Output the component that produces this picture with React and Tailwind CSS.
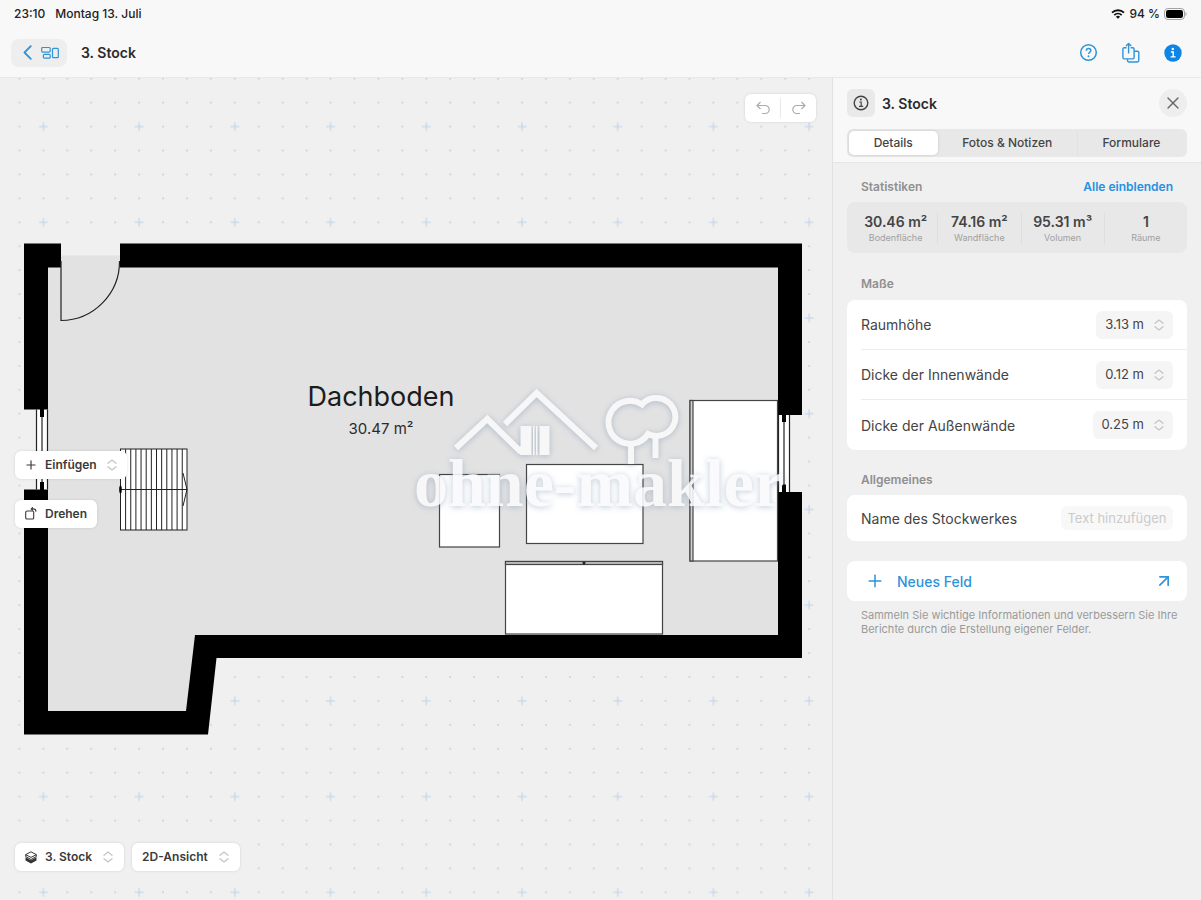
import React, { useState } from 'react';
import { Plus, ArrowUpRight, X } from 'lucide-react';

const TABS = [
  { id: 'details', label: 'Details' },
  { id: 'notes', label: 'Fotos & Notizen' },
  { id: 'forms', label: 'Formulare' },
];

const STATS = [
  { label: 'Bodenfläche', value: '30.46 m²' },
  { label: 'Wandfläche', value: '74.16 m²' },
  { label: 'Volumen', value: '95.31 m³' },
  { label: 'Räume', value: '1' },
];

const MEASURES = [
  { id: 'height', label: 'Raumhöhe', value: '3.13 m' },
  { id: 'inner', label: 'Dicke der Innenwände', value: '0.12 m' },
  { id: 'outer', label: 'Dicke der Außenwände', value: '0.25 m' },
];

const GRID = 95.72;
const DOTS = [0, 1, 2, 3].flatMap(r => [0, 1, 2, 3].map(c => [c, r])).filter(([c, r]) => c + r > 0);
const STEPS = Array.from({ length: 12 }, (_, i) => 125.6 + i * 5.15);

function UpDown({ className = '' }) {
  return (
    <svg viewBox="0 0 10 12" className={`w-[10px] h-3 fill-none stroke-[#c4c4c4] ${className}`} strokeWidth="1.2" strokeLinecap="round" strokeLinejoin="round">
      <path d="M1 4.3 5 1l4 3.3M1 7.7 5 11l4-3.3" />
    </svg>
  );
}

function InfoGlyph({ className }) {
  return (
    <svg viewBox="0 0 18 18" className={className} fill="none" stroke="currentColor" strokeWidth="1.4">
      <circle cx="9" cy="9" r="6.8" />
      <circle cx="8.9" cy="5.6" r="1" fill="currentColor" stroke="none" />
      <path d="M7.3 8h1.9v4.2M7 12.3h4.2" strokeWidth="1.2" />
    </svg>
  );
}

function StatusBar() {
  return (
    <div className="flex items-center justify-between h-7 px-[14px] text-[12px] font-medium text-[#222]">
      <div className="flex gap-[10px]">
        <span>23:10</span>
        <span>Montag 13. Juli</span>
      </div>
      <div className="flex items-center gap-1">
        <svg viewBox="0 0 14 10" className="w-[14px] h-[10px]" fill="none" stroke="#111" strokeWidth="1.8">
          <path d="M1 3.7a8.6 8.6 0 0 1 12 0M3.3 6.1a5.3 5.3 0 0 1 7.4 0" />
          <path d="M7 9.8 4.9 7.7a3 3 0 0 1 4.2 0Z" fill="#111" stroke="none" />
        </svg>
        <span>94 %</span>
        <svg viewBox="0 0 23 12" className="w-[23px] h-3">
          <rect x=".5" y=".5" width="20" height="11" rx="3.5" fill="none" stroke="#a3a3a3" />
          <rect x="2" y="2" width="17" height="8" rx="2.2" fill="#000" />
          <path d="M21.5 4v4c1.5-.7 1.5-3.3 0-4Z" fill="#a3a3a3" />
        </svg>
      </div>
    </div>
  );
}

function NavBar() {
  return (
    <div className="flex items-center h-[49px] pl-[11px] pr-[19px]">
      <button aria-label="Zurück" className="flex items-center h-7 pl-3 pr-2 gap-[9px] rounded-lg bg-[#eeeeee] text-[#2f93d8]">
        <svg viewBox="0 0 9 15" className="w-[9px] h-[15px]" fill="none" stroke="currentColor" strokeWidth="1.8" strokeLinecap="round" strokeLinejoin="round">
          <path d="M7.8 1.2 1.5 7.5l6.3 6.3" />
        </svg>
        <svg viewBox="0 0 18 14" className="w-[18px] h-[14px]" fill="none" stroke="currentColor" strokeWidth="1.2">
          <rect x=".7" y="1.5" width="8.5" height="4.6" rx="1" />
          <rect x="2.4" y="8.3" width="6.8" height="3.9" rx="1" />
          <rect x="11.5" y="2.3" width="5.8" height="9.4" rx="1" />
        </svg>
      </button>
      <h1 className="ml-[14px] text-[14px] font-semibold text-[#2b2b2b]">3. Stock</h1>
      <div className="flex items-center gap-6 ml-auto text-[#2f93d8]">
        <button aria-label="Hilfe">
          <svg viewBox="0 0 20 20" className="w-[19px] h-[19px]" fill="none" stroke="currentColor" strokeWidth="1.6">
            <circle cx="10" cy="10" r="8.2" />
            <path d="M7.7 8.1c.1-3 4.7-2.9 4.7-.1 0 1.8-2.3 1.7-2.3 3.7" />
            <circle cx="10" cy="14" r="1" fill="currentColor" stroke="none" />
          </svg>
        </button>
        <button aria-label="Teilen">
          <svg viewBox="0 0 18 21" className="w-[18px] h-[21px]" fill="none" stroke="currentColor" strokeWidth="1.4" strokeLinejoin="round">
            <path d="M4.6 5.7H2.3c-.8 0-1.4.5-1.4 1.3v8.5c0 .8.6 1.4 1.4 1.4h8.4c.8 0 1.4-.6 1.4-1.4V7c0-.8-.6-1.3-1.4-1.3H8.6" />
            <path d="M6.6 11.5V1.4M4 4l2.6-2.6L9.2 4M5.5 17v1.6c0 .8.6 1.4 1.4 1.4h8.5c.8 0 1.4-.6 1.4-1.4v-8c0-.8-.6-1.3-1.4-1.3h-3.2" />
          </svg>
        </button>
        <button aria-label="Informationen">
          <svg viewBox="0 0 18 18" className="w-[18px] h-[18px]">
            <circle cx="9" cy="9" r="8.7" fill="#0d84e6" />
            <circle cx="8.8" cy="5" r="1.2" fill="#fff" />
            <path d="M6.9 8h2.3v4.8M6.6 12.9h5" fill="none" stroke="#fff" strokeWidth="1.4" />
          </svg>
        </button>
      </div>
    </div>
  );
}

function Watermark() {
  return (
    <g className="drop-shadow-[0_1px_3px_rgba(120,145,175,0.55)]" opacity="0.88">
      <g fill="none" stroke="#fafafc" strokeWidth="6">
        <path d="M456 370 487.3 341 521 374" />
        <path d="M505 346 536.6 315 596 370" />
        <path d="M642 326.5A21.5 21.5 0 1 0 648 356A19 19 0 1 0 642 326.5Z" />
        <path d="M631 367V386M655.5 358V380" />
      </g>
      <path d="M520.5 348h11v29h-11l-4-5 4-4ZM533 348h1.5v29H533ZM536 348h1.5v29H536ZM539.5 348h10v29h-10Z" fill="#fafafc" />
      <text x="414" y="428" className="text-[68px] font-bold font-['Liberation_Serif',serif]" fill="#fafafc">ohne-makler</text>
    </g>
  );
}

function FloorPlan() {
  return (
    <svg className="absolute inset-0 w-full h-full" role="img" aria-label="Grundriss Dachboden">
      <defs>
        <pattern id="grid" width={GRID} height={GRID} patternUnits="userSpaceOnUse" patternTransform="translate(31.4 36.6)">
          <path d="M7.5 12h9M12 7.5v9" stroke="#bdd1e8" />
          {DOTS.map(([c, r]) => (
            <circle key={`${c}-${r}`} cx={12 + c * 23.93} cy={12 + r * 23.93} r="1" fill="#cbcfd4" />
          ))}
        </pattern>
      </defs>
      <rect width="100%" height="100%" fill="url(#grid)" />

      {/* room and walls */}
      <path d="M24 165.500H802V580H216.500L208 656.500H24Z" fill="#000" />
      <path d="M48 189.500H778V557H195L186 633H48Z" fill="#e2e2e2" />

      {/* door */}
      <path d="M61 165H120V178H61Z" fill="#f0f0f0" />
      <path d="M61 177.5H120V190H61Z" fill="#e2e2e2" />
      <path d="M61 183V242.5A59 59 0 0 0 119.5 183" fill="none" stroke="#222" strokeWidth="1.2" />

      {/* windows */}
      <path d="M23 331.5H36V411.5H23ZM790 337H803V414H790Z" fill="#f0f0f0" />
      <path d="M36 331.5H48V411.5H36ZM778 337H790V414H778Z" fill="#fff" />
      <path d="M36.5 331.5V411.5M42 331.5V411.5M47.5 331.5V411.5M784 337V414M789.5 337V414M778.5 337V414" stroke="#222" strokeWidth="1.2" />
      <path d="M40 331h4v8h-4ZM40 404h4v8h-4ZM782 337h4v7h-4ZM782 406.5h4v8h-4Z" fill="#000" />

      {/* stairs */}
      <g stroke="#222" fill="none">
        <rect x="120.5" y="371" width="66.5" height="81" fill="#fff" />
        {STEPS.map(x => <path key={x} d={`M${x} 371v81`} />)}
        <path d="M120.5 411.5H187M183 395l4 16.5-4 16.5" />
        <ellipse cx="120.5" cy="411.5" rx="1.3" ry="4" fill="#000" stroke="none" />
      </g>

      {/* furniture */}
      <g fill="#fff" stroke="#444" strokeWidth="1.2">
        <rect x="439.5" y="396.5" width="60" height="72.5" />
        <rect x="526.5" y="386.5" width="116.5" height="79" />
        <rect x="505.5" y="483.5" width="157" height="72.5" />
        <rect x="505.5" y="483.5" width="157" height="3" fill="#c4c4c4" />
        <rect x="690" y="322.5" width="87.5" height="160.5" />
        <rect x="690" y="322.5" width="3" height="160.5" fill="#d0d0d0" />
      </g>
      <circle cx="584" cy="485" r="1.5" fill="#222" />

      <text x="381" y="328" textAnchor="middle" className="text-[27px]" fill="#1c1c1c">Dachboden</text>
      <text x="381" y="356" textAnchor="middle" className="text-[15px]" fill="#2b2b2b">30.47 m²</text>

      <Watermark />
    </svg>
  );
}

const floating = 'flex items-center h-7 rounded-md bg-white text-[12px] font-semibold text-[#3a3a3a] shadow-[0_0_3px_rgba(0,0,0,0.12)]';

function Canvas() {
  return (
    <main className="relative flex-1 min-w-0 overflow-hidden bg-[#f0f0f0]">
      <FloorPlan />

      <div className={`${floating} absolute top-4 right-4`}>
        <button aria-label="Rückgängig" className="flex items-center justify-center w-[35px] h-7 text-[#ababab]">
          <svg viewBox="0 0 14 14" className="w-[14px] h-[14px]" fill="none" stroke="currentColor" strokeWidth="1.2">
            <path d="M4.5 1 1 4.5 4.5 8M1 4.5h8.2a4 4 0 0 1 0 8H6" />
          </svg>
        </button>
        <span className="w-px h-5 bg-[#e8e8e8]" />
        <button aria-label="Wiederholen" className="flex items-center justify-center w-[35px] h-7 text-[#ababab]">
          <svg viewBox="0 0 14 14" className="w-[14px] h-[14px]" fill="none" stroke="currentColor" strokeWidth="1.2">
            <path d="M9.5 1 13 4.5 9.5 8M13 4.5H4.8a4 4 0 0 0 0 8H8" />
          </svg>
        </button>
      </div>

      <div className="absolute inset-y-0 left-[15px] flex flex-col items-start justify-center gap-[21px] pointer-events-none">
        <button className={`${floating} px-[10px] pointer-events-auto`}>
          <Plus className="w-[14px] h-[14px] -ml-px mr-[7px]" strokeWidth={2} />
          Einfügen
          <UpDown className="ml-[10px]" />
        </button>
        <button className={`${floating} px-[10px] pointer-events-auto`}>
          <svg viewBox="0 0 12 13" className="w-3 h-[13px] mr-2" fill="none" stroke="#3a3a3a" strokeWidth="1.1">
            <rect x=".7" y="4" width="8" height="8" rx="1.3" />
            <path d="M7.8.3 6.2 1.9l1.6 1.6M6.4 1.9h1.9c1.7 0 2.6.9 2.7 2.7" />
          </svg>
          Drehen
        </button>
      </div>

      <div className="absolute bottom-[29px] left-[15px] flex gap-2">
        <label className={`${floating} pl-[10px] pr-[11px]`}>
          <svg viewBox="0 0 12 13" className="w-3 h-[13px] mr-2">
            <path d="M.5 6.2v3.3L6 12.6l5.5-3.1V6.2L6 9.2Z" fill="#333" />
            <path d="M.7 3.6 6 .8l5.3 2.8v2L6 8.5.7 5.6ZM.7 3.7 6 6.4l5.3-2.7" fill="#fff" stroke="#333" strokeLinejoin="round" />
          </svg>
          <select aria-label="Stockwerk" className="appearance-none field-sizing-content outline-none">
            <option>3. Stock</option>
          </select>
          <UpDown className="ml-[11px]" />
        </label>
        <label className={`${floating} pl-[10px] pr-[11px]`}>
          <select aria-label="Ansicht" className="appearance-none field-sizing-content outline-none">
            <option>2D-Ansicht</option>
          </select>
          <UpDown className="ml-[11px]" />
        </label>
      </div>
    </main>
  );
}

function SectionTitle({ children }) {
  return <h3 className="px-[14px] text-[12px] leading-5 font-semibold text-[#8f8f8f]">{children}</h3>;
}

function Panel() {
  const [tab, setTab] = useState('details');

  return (
    <aside className="flex flex-col w-[369px] shrink-0 border-l border-[#e2e2e2] bg-[#f0f0f0]">
      <div className="px-[14px] pt-[11px] pb-[5px] bg-[#f8f8f8] border-b border-[#e6e6e6]">
        <div className="flex items-center">
          <span className="flex items-center justify-center w-7 h-7 rounded-md bg-[#e9e9e9] text-[#444]">
            <InfoGlyph className="w-[18px] h-[18px]" />
          </span>
          <h2 className="ml-[7px] text-[14px] font-semibold text-[#2b2b2b]">3. Stock</h2>
          <button aria-label="Schließen" className="flex items-center justify-center w-7 h-7 ml-auto rounded-full bg-[#eeeeee] text-[#666]">
            <X className="w-5 h-5" strokeWidth={1.6} />
          </button>
        </div>
        <div role="tablist" className="flex h-7 mt-3 p-[2px] rounded-md bg-[#e8e8e8]">
          {TABS.map(({ id, label }, i) => (
            <button
              key={id}
              role="tab"
              aria-selected={tab === id}
              onClick={() => setTab(id)}
              className={`flex-auto text-[12px] font-medium text-[#444] ${tab === id ? 'bg-white rounded-[5px] shadow-[0_0_3px_rgba(0,0,0,0.15)]' : ''} ${i === 2 ? 'border-l border-[#e1e1e1]' : ''}`}
            >
              {label}
            </button>
          ))}
        </div>
      </div>

      <div className="px-[14px] pt-[14px]">
        <div className="flex items-center justify-between mb-[5px]">
          <SectionTitle>Statistiken</SectionTitle>
          <a href="#statistiken" className="pr-[14px] text-[12px] leading-5 font-semibold text-[#2490e0]">Alle einblenden</a>
        </div>
        <dl className="grid grid-cols-4 pl-[7px] pt-[11px] pb-[9px] rounded-lg bg-[#e8e8e8]">
          {STATS.map((s, i) => (
            <div key={s.label} className={`flex flex-col-reverse text-center ${i > 0 ? 'border-l border-[#dedede]' : ''}`}>
              <dt className="text-[9px] leading-[13px] text-[#a0a0a0]">{s.label}</dt>
              <dd className="text-[14px] leading-[18px] font-semibold text-[#444]">{s.value}</dd>
            </div>
          ))}
        </dl>

        <div className="mt-[21px] mb-[6px]">
          <SectionTitle>Maße</SectionTitle>
        </div>
        <div className="pl-[14px] rounded-lg bg-white divide-y divide-[#ececec]">
          {MEASURES.map(m => (
            <div key={m.id} className="flex items-center justify-between h-[50px] pr-[14px] text-[14px] text-[#444]">
              <label htmlFor={m.id}>{m.label}</label>
              <span className="flex items-center h-7 px-[9px] rounded-md bg-[#f5f5f5]">
                <select id={m.id} className="appearance-none field-sizing-content text-[13px] outline-none">
                  <option>{m.value}</option>
                </select>
                <UpDown className="ml-[10px]" />
              </span>
            </div>
          ))}
        </div>

        <div className="mt-5 mb-[5px]">
          <SectionTitle>Allgemeines</SectionTitle>
        </div>
        <div className="flex items-center justify-between h-[46px] px-[14px] rounded-lg bg-white text-[14px] text-[#444]">
          <label htmlFor="floor-name">Name des Stockwerkes</label>
          <input
            id="floor-name"
            placeholder="Text hinzufügen"
            className="w-28 h-6 rounded-md bg-[#f8f8f8] text-center text-[13px] placeholder:text-[#cbcbcb] outline-none"
          />
        </div>

        <button className="flex items-center w-full h-10 mt-5 pl-[18px] pr-[13px] rounded-lg bg-white text-[14px] font-medium text-[#2f93d8]">
          <Plus className="w-5 h-5 mr-3" strokeWidth={1.8} />
          Neues Feld
          <ArrowUpRight className="w-5 h-5 ml-auto" strokeWidth={2} />
        </button>
        <p className="mt-[7px] pl-[14px] text-[11px] leading-[14px] text-[#9a9a9a]">
          Sammeln Sie wichtige Informationen und verbessern Sie Ihre Berichte durch die Erstellung eigener Felder.
        </p>
      </div>
    </aside>
  );
}

export default function App() {
  return (
    <div className="flex flex-col h-screen bg-[#f0f0f0] font-['Inter',sans-serif]">
      <header className="bg-[#f8f8f8] border-b border-[#e8e8e8]">
        <StatusBar />
        <NavBar />
      </header>
      <div className="flex flex-1 min-h-0">
        <Canvas />
        <Panel />
      </div>
    </div>
  );
}
